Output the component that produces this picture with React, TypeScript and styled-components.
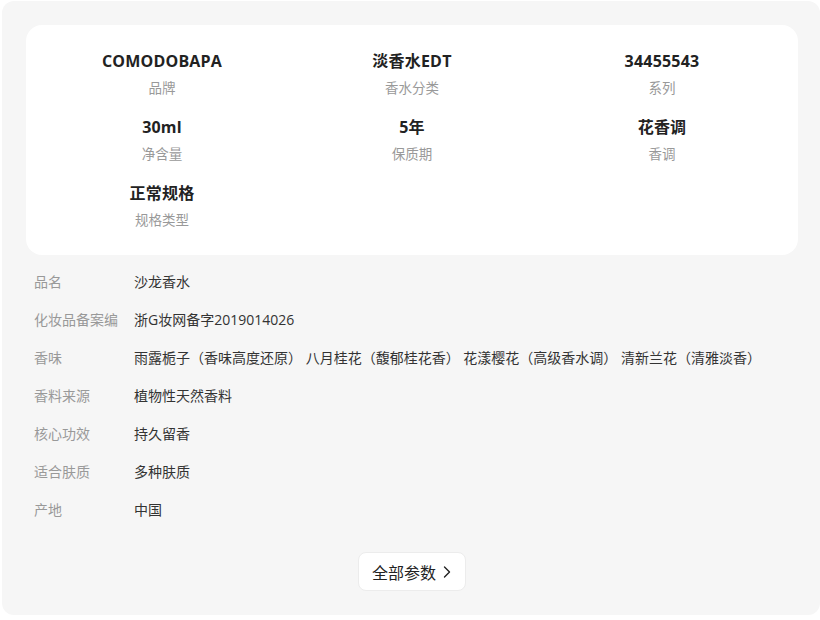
import React from "react";
import styled, { createGlobalStyle } from "styled-components";

const Global = createGlobalStyle`
  html, body { margin: 0; padding: 0; background: #ffffff; }
  body { font-family: "Open Sans", "Noto Sans CJK SC", sans-serif; }
  * { box-sizing: border-box; }
`;

const Panel = styled.section`
  margin: 1px 0 0 2px;
  width: 818px;
  background: #f6f6f6;
  border-radius: 12px;
  padding: 24px 22px 24px 24px;
  display: flex;
  flex-direction: column;
`;

const SummaryCard = styled.div`
  background: #ffffff;
  border-radius: 16px;
  padding: 24px 11px 25px;
  display: grid;
  grid-template-columns: repeat(3, 1fr);
  row-gap: 17px;
`;

const Cell = styled.div`
  display: flex;
  flex-direction: column;
  align-items: center;
`;

const CellValue = styled.div`
  font-size: 16px;
  line-height: 24px;
  font-weight: 700;
  color: #222222;
  letter-spacing: 0.2px;
`;

const CellLabel = styled.div`
  margin-top: 5px;
  font-size: 13.5px;
  line-height: 20px;
  color: #999999;
`;

const List = styled.div`
  margin-top: 7px;
  display: flex;
  flex-direction: column;
  padding-left: 8px;
`;

const Row = styled.div`
  display: flex;
  align-items: center;
  height: 38px;
  font-size: 14px;
`;

const RowLabel = styled.div`
  width: 86px;
  margin-right: 14px;
  white-space: nowrap;
  color: #999999;
`;

const RowValue = styled.div`
  color: #333333;
  white-space: nowrap;
`;

const Footer = styled.div`
  display: flex;
  justify-content: center;
  margin-top: 24px;
`;

const AllButton = styled.button`
  display: flex;
  align-items: center;
  gap: 7px;
  height: 39px;
  padding: 0 14px 0 13px;
  background: #ffffff;
  border: 1px solid #ececec;
  border-radius: 8px;
  font-family: "Open Sans", "Noto Sans CJK SC", sans-serif;
  font-size: 16px;
  color: #222222;
  cursor: pointer;
`;

const summary = [
  { v: "COMODOBAPA", l: "品牌" },
  { v: "淡香水EDT", l: "香水分类" },
  { v: "34455543", l: "系列" },
  { v: "30ml", l: "净含量" },
  { v: "5年", l: "保质期" },
  { v: "花香调", l: "香调" },
  { v: "正常规格", l: "规格类型" },
];

const rows = [
  { l: "品名", v: "沙龙香水" },
  { l: "化妆品备案编", v: "浙G妆网备字2019014026" },
  {
    l: "香味",
    v: "雨露栀子（香味高度还原） 八月桂花（馥郁桂花香） 花漾樱花（高级香水调） 清新兰花（清雅淡香）",
  },
  { l: "香料来源", v: "植物性天然香料" },
  { l: "核心功效", v: "持久留香" },
  { l: "适合肤质", v: "多种肤质" },
  { l: "产地", v: "中国" },
];

export default function App() {
  return (
    <>
      <Global />
      <Panel>
        <SummaryCard>
          {summary.map((s) => (
            <Cell key={s.l}>
              <CellValue>{s.v}</CellValue>
              <CellLabel>{s.l}</CellLabel>
            </Cell>
          ))}
        </SummaryCard>
        <List>
          {rows.map((r) => (
            <Row key={r.l}>
              <RowLabel>{r.l}</RowLabel>
              <RowValue>{r.v}</RowValue>
            </Row>
          ))}
        </List>
        <Footer>
          <AllButton>
            全部参数
            <svg width="8" height="12" viewBox="0 0 8 12" fill="none">
              <polyline
                points="1.5,1 6.5,6 1.5,11"
                stroke="#222"
                strokeWidth="1.4"
                strokeLinecap="round"
                strokeLinejoin="round"
              />
            </svg>
          </AllButton>
        </Footer>
      </Panel>
    </>
  );
}
